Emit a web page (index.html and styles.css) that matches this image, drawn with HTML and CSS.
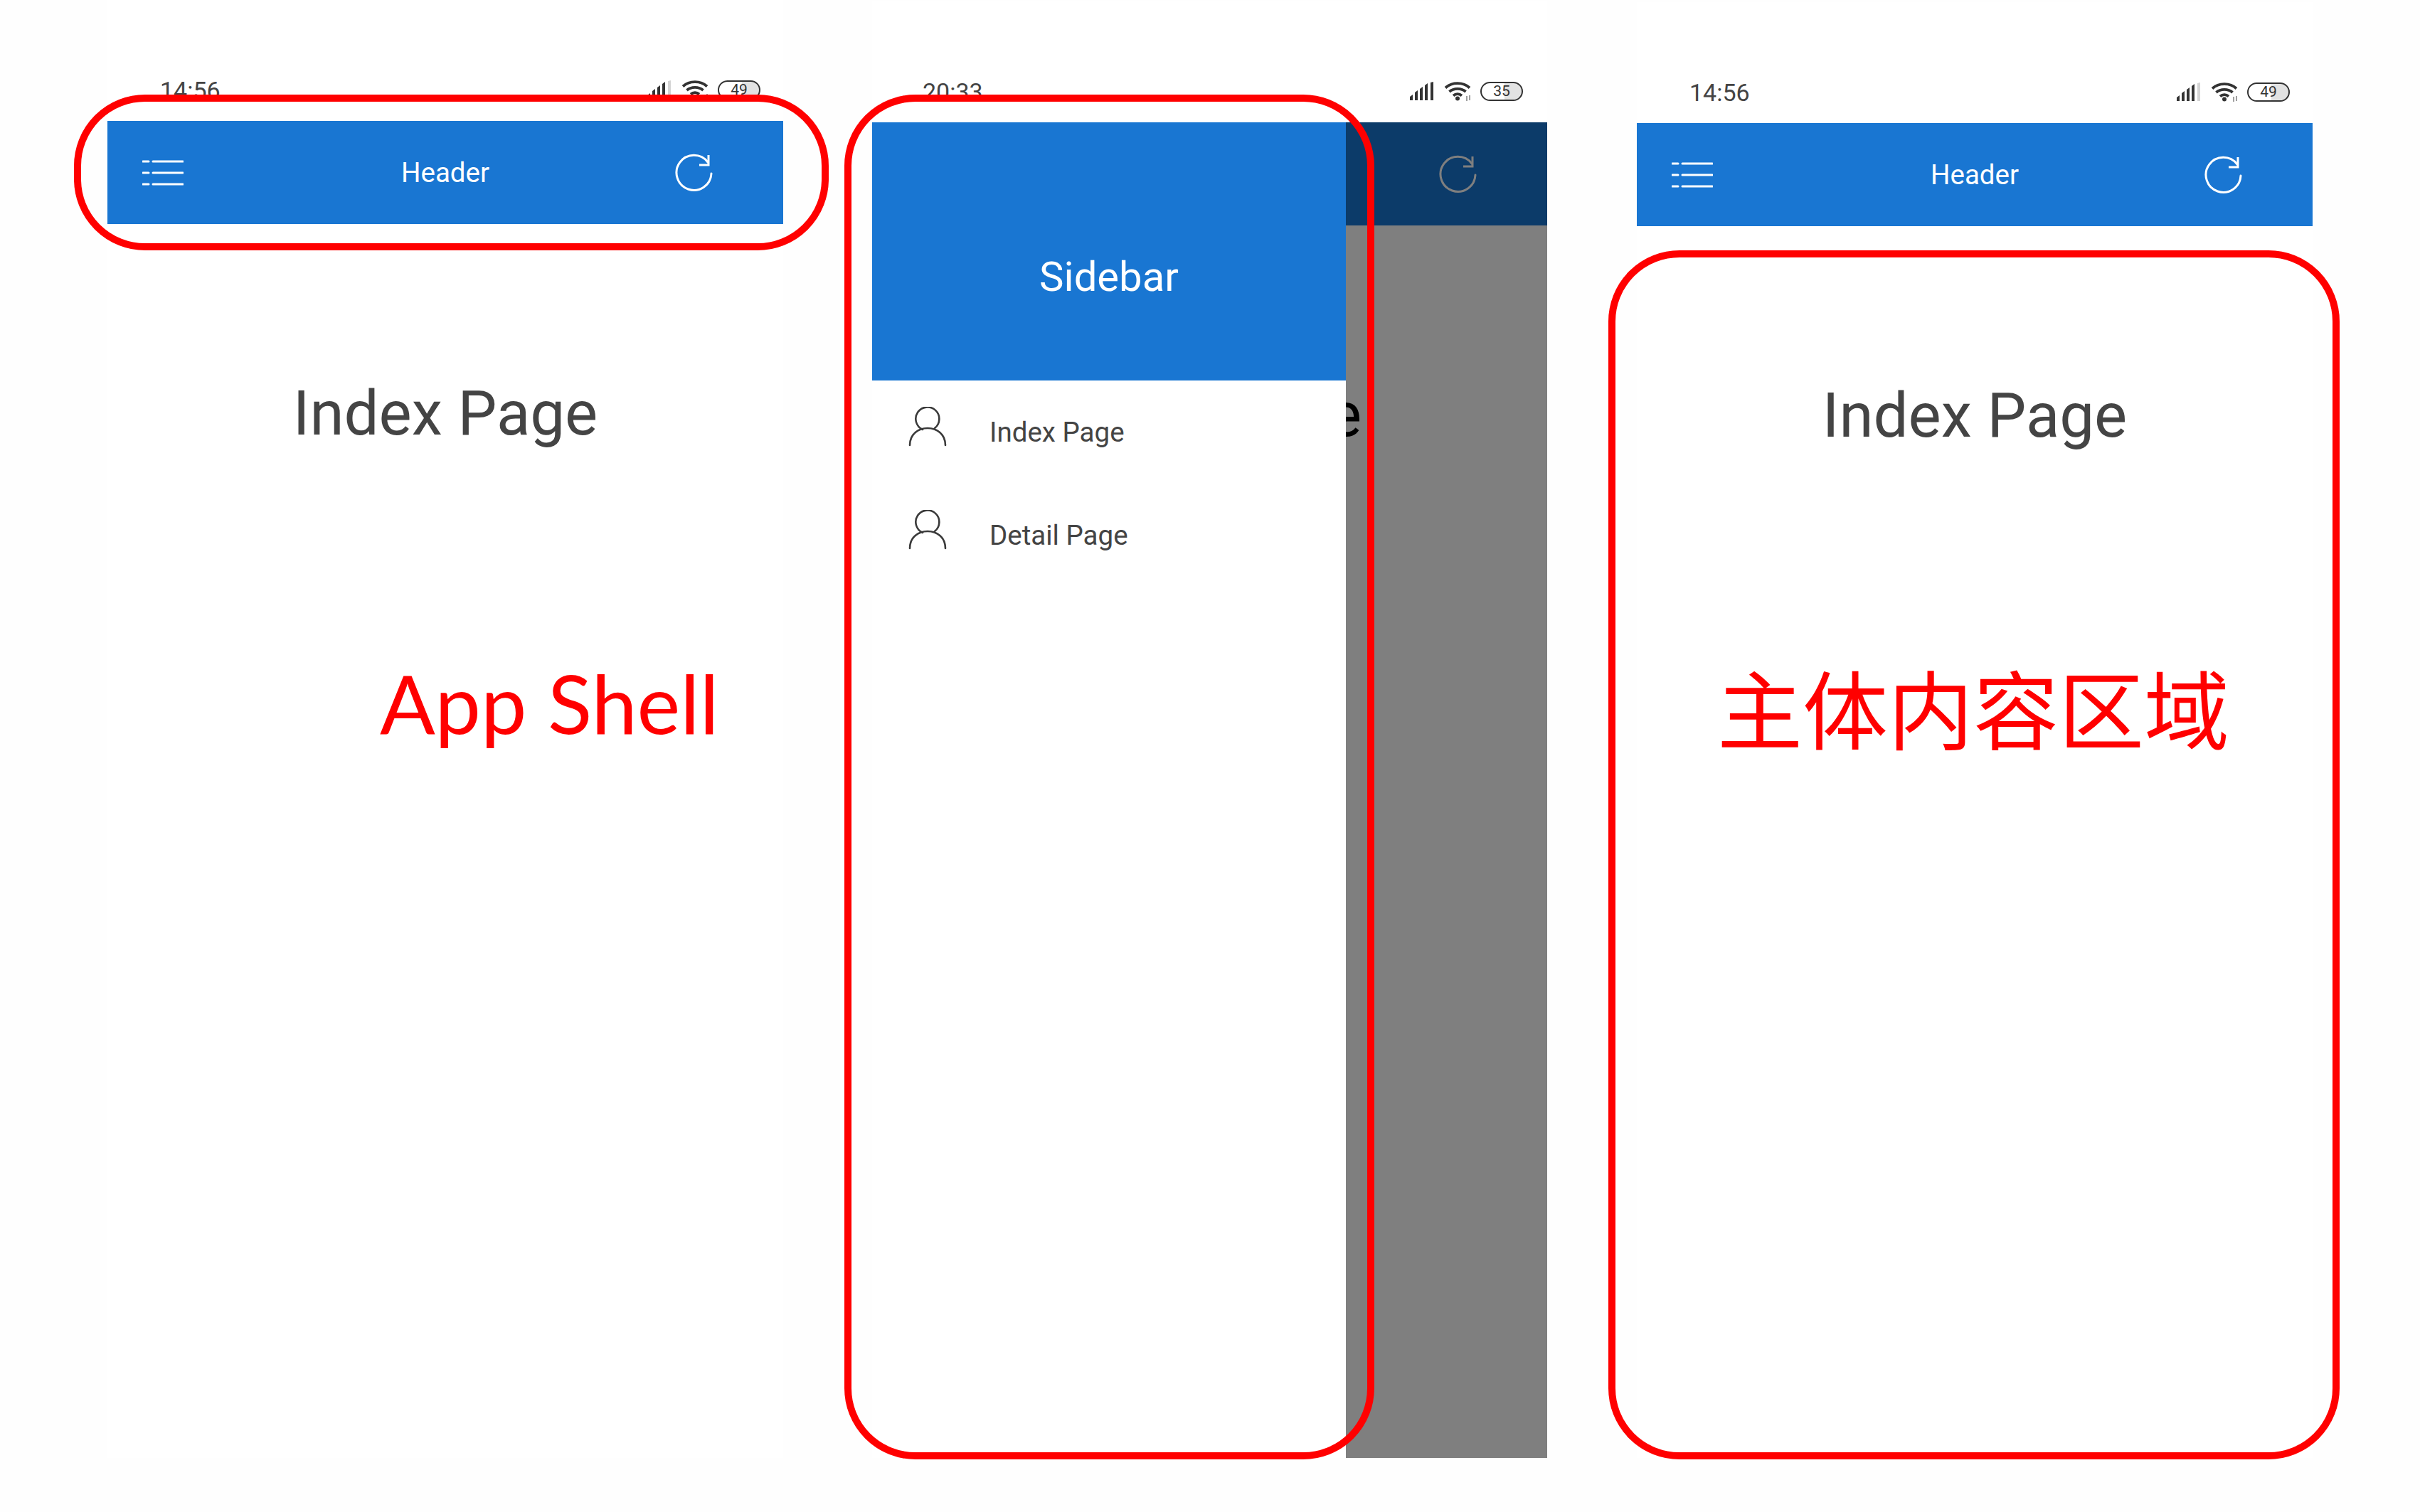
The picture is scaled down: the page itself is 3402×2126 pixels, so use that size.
FILE: index.html
```html
<!DOCTYPE html>
<html lang="zh">
<head>
    <meta charset="UTF-8">
    <meta name="viewport" content="width=device-width, initial-scale=1.0">
    <title>App Shell</title>
    <link rel="stylesheet" href="styles.css">
</head>
<body>

    <svg class="icon-defs" width="0" height="0">
        <symbol id="i-signal" viewBox="0 0 36 27">
            <path d="M1 26v-5l4-3v8zM8 26V15l4-3v14zM15 26V10l4-3v19zM22 26V5l4-3v24z" fill="#333"/>
            <path d="M30 26V1l4-1v26z" fill="#333"/>
        </symbol>
        <symbol id="i-signal-weak" viewBox="0 0 36 27">
            <path d="M1 26v-5l4-3v8zM8 26V15l4-3v14zM15 26V10l4-3v19zM22 26V5l4-3v24z" fill="#333"/>
            <path d="M30 26V1l4-1v26z" fill="#d4d4d4"/>
        </symbol>
        <symbol id="i-wifi" viewBox="0 0 38 28">
            <g fill="none" stroke="#333" stroke-width="3.8">
                <path d="M2 9.5C11 1 27 1 36 9.5"/>
                <path d="M7.5 15C13.5 9.5 24.5 9.5 30.5 15"/>
                <path d="M13 20.5C16.5 17.5 21.5 17.5 25 20.5"/>
            </g>
            <circle cx="19" cy="24.5" r="3" fill="#333"/>
            <path d="M32 21v7M36 20v7" fill="none" stroke="#777" stroke-width="1.4"/>
        </symbol>
        <symbol id="i-menu" viewBox="0 0 58 36">
            <path d="M1 2h8M15 2h42M1 18h8M15 18h42M1 34h8M15 34h42" fill="none" stroke="#fff" stroke-width="3" stroke-linecap="round"/>
        </symbol>
        <symbol id="i-refresh" viewBox="0 0 56 56">
            <path d="M52 29A24.5 24.5 0 1 1 47 13" fill="none" stroke="currentColor" stroke-width="3" stroke-linecap="round"/>
            <path d="M48 3v14H35" fill="none" stroke="currentColor" stroke-width="3"/>
        </symbol>
        <symbol id="i-user" viewBox="0 0 56 56">
            <path d="M38 30A16.5 16.5 0 1 0 21 32" fill="none" stroke="#3a3a3a" stroke-width="2.6" stroke-linecap="round"/>
            <path d="M3 54C3 22 53 22 53 54" fill="none" stroke="#3a3a3a" stroke-width="2.6" stroke-linecap="round"/>
        </symbol>
    </svg>

    <div class="screens">

        <div class="phone phone-shell">
            <div class="status-bar">
                <span class="time">14:56</span>
                <div class="status-icons">
                    <svg class="ic-signal"><use href="#i-signal-weak"/></svg>
                    <svg class="ic-wifi"><use href="#i-wifi"/></svg>
                    <div class="battery">49</div>
                </div>
            </div>
            <div class="app">
                <div class="header">
                    <svg class="ic-menu"><use href="#i-menu"/></svg>
                    <span class="header-title">Header</span>
                    <svg class="ic-refresh"><use href="#i-refresh"/></svg>
                </div>
                <div class="content">Index Page</div>
            </div>
        </div>

        <div class="phone phone-drawer">
            <div class="status-bar">
                <span class="time">20:33</span>
                <div class="status-icons">
                    <svg class="ic-signal"><use href="#i-signal"/></svg>
                    <svg class="ic-wifi"><use href="#i-wifi"/></svg>
                    <div class="battery">35</div>
                </div>
            </div>
            <div class="app">
                <div class="header">
                    <svg class="ic-refresh"><use href="#i-refresh"/></svg>
                </div>
                <div class="content content-peek">e</div>
                <div class="mask"></div>
                <div class="sidebar">
                    <div class="sidebar-head">Sidebar</div>
                    <div class="sidebar-item">
                        <svg class="ic-user"><use href="#i-user"/></svg>
                        <span>Index Page</span>
                    </div>
                    <div class="sidebar-item">
                        <svg class="ic-user"><use href="#i-user"/></svg>
                        <span>Detail Page</span>
                    </div>
                </div>
            </div>
        </div>

        <div class="phone phone-content">
            <div class="status-bar">
                <span class="time">14:56</span>
                <div class="status-icons">
                    <svg class="ic-signal"><use href="#i-signal-weak"/></svg>
                    <svg class="ic-wifi"><use href="#i-wifi"/></svg>
                    <div class="battery">49</div>
                </div>
            </div>
            <div class="app">
                <div class="header">
                    <svg class="ic-menu"><use href="#i-menu"/></svg>
                    <span class="header-title">Header</span>
                    <svg class="ic-refresh"><use href="#i-refresh"/></svg>
                </div>
                <div class="content">Index Page</div>
            </div>
        </div>

    </div>

    <div class="outline outline-shell"></div>
    <div class="outline outline-sidebar"></div>
    <div class="outline outline-content"></div>

    <div class="note note-shell">App Shell</div>
    <div class="note note-content">主体内容区域</div>

</body>
</html>
```

FILE: styles.css
```css
body {
    position: relative;
    width: 3402px;
    height: 2126px;
    margin: 0;
    overflow: hidden;
    background: #fefefe;
    font-family: Roboto, sans-serif;
    color: #444;
}

.icon-defs {
    position: absolute;
}

.screens {
    display: flex;
    gap: 125px;
    padding-left: 151px;
}

.phone {
    display: flex;
    flex-direction: column;
    width: 950px;
}

.phone-shell {
    height: 2050px;
}

.phone-drawer {
    width: 949px;
    height: 2048px;
    margin-right: 1px;
    padding-top: 2px;
}

.phone-drawer .status-bar {
    padding-right: 34px;
    padding-left: 71px;
}

.phone-content {
    height: 2047px;
    padding-top: 3px;
}

.status-bar {
    display: flex;
    align-items: center;
    justify-content: space-between;
    flex: none;
    height: 170px;
    box-sizing: border-box;
    padding: 84px 32px 0 74px;
    background: #fff;
}

.time {
    font-size: 34px;
    line-height: 40px;
}

.status-icons {
    display: flex;
    align-items: center;
    margin-top: -2px;
}

.ic-signal {
    width: 36px;
    height: 27px;
    margin-right: 13px;
}

.ic-wifi {
    width: 38px;
    height: 28px;
    margin-right: 13px;
}

.battery {
    width: 60px;
    height: 27px;
    box-sizing: border-box;
    border: 2.5px solid #333;
    border-radius: 14px;
    background: linear-gradient(90deg, #fff 58%, #e2e2e2 58%);
    color: #333;
    font-size: 21px;
    line-height: 22px;
    text-align: center;
}

.app {
    position: relative;
    flex: 1;
    display: flex;
    flex-direction: column;
    overflow: hidden;
    background: #fff;
}

.header {
    display: grid;
    grid-template-columns: 1fr auto 1fr;
    align-items: center;
    flex: none;
    height: 145px;
    padding: 0 97px 0 49px;
    background: #1976d2;
    color: #fff;
}

.ic-menu {
    width: 58px;
    height: 36px;
}

.ic-refresh {
    grid-column: 3;
    justify-self: end;
    width: 56px;
    height: 56px;
}

.header-title {
    margin-left: 48px;
    font-size: 38.5px;
}

.content {
    padding-top: 216px;
    font-size: 87px;
    line-height: 100px;
    text-align: center;
}

/* only the end of the title shows past the open sidebar */
.content-peek {
    padding-left: 642px;
    color: #000;
    text-align: left;
}

.mask {
    position: absolute;
    top: 0;
    right: 0;
    bottom: 0;
    left: 0;
    background: rgba(0, 0, 0, 0.5);
}

.sidebar {
    position: absolute;
    top: 0;
    bottom: 0;
    left: 0;
    width: 666px;
    background: #fff;
}

.sidebar-head {
    display: flex;
    align-items: center;
    justify-content: center;
    height: 363px;
    box-sizing: border-box;
    padding-top: 70px;
    background: #1976d2;
    color: #fff;
    font-size: 58px;
}

.sidebar-item {
    display: flex;
    align-items: center;
    height: 145px;
    padding-left: 50px;
    font-size: 38.5px;
}

.ic-user {
    width: 56px;
    height: 56px;
    margin-right: 59px;
    margin-bottom: 16px;
}

/* red marks drawn over the screens */
.outline {
    position: absolute;
    box-sizing: border-box;
    border: 10px solid #f00;
    border-radius: 100px;
}

.outline-shell {
    top: 133px;
    left: 104px;
    width: 1061px;
    height: 219px;
}

.outline-sidebar {
    top: 133px;
    left: 1187px;
    width: 745px;
    height: 1919px;
}

.outline-content {
    top: 352px;
    left: 2261px;
    width: 1028px;
    height: 1700px;
}

.note {
    position: absolute;
    color: #f00;
}

.note-shell {
    top: 912px;
    left: 534px;
    font-family: Lato, sans-serif;
    font-size: 115px;
    line-height: 150px;
}

.note-content {
    top: 918px;
    left: 2414px;
    font-family: "Noto Sans CJK SC", sans-serif;
    font-size: 120px;
    line-height: 150px;
}
```
